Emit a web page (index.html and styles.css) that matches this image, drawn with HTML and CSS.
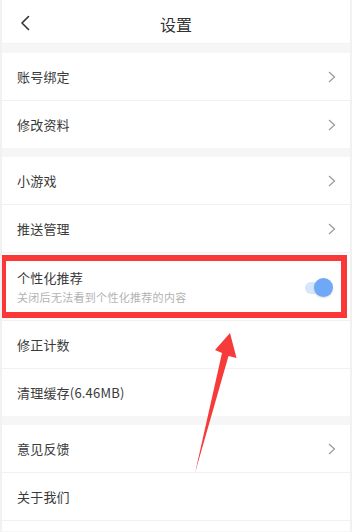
FILE: index.html
```html
<!DOCTYPE html>
<html lang="zh-CN">
<head>
<meta charset="utf-8">
<title>设置</title>
<link rel="stylesheet" href="styles.css">
</head>
<body>
<div class="page">
  <header class="topbar">
    <span class="back">
      <svg width="10" height="16" viewBox="0 0 10 16"><polyline points="8.5,1.5 2,8 8.5,14.5" fill="none" stroke="#333" stroke-width="1.6" stroke-linecap="round" stroke-linejoin="round"/></svg>
    </span>
    <h1 class="title">设置</h1>
    <span></span>
  </header>

  <section class="group">
    <div class="row"><span class="label">账号绑定</span><svg class="chev" width="8" height="12" viewBox="0 0 8 12"><polyline points="1,1 6.5,6 1,11" fill="none" stroke="#9a9a9a" stroke-width="1.2"/></svg></div>
    <div class="row last"><span class="label">修改资料</span><svg class="chev" width="8" height="12" viewBox="0 0 8 12"><polyline points="1,1 6.5,6 1,11" fill="none" stroke="#9a9a9a" stroke-width="1.2"/></svg></div>
  </section>

  <section class="group">
    <div class="row"><span class="label">小游戏</span><svg class="chev" width="8" height="12" viewBox="0 0 8 12"><polyline points="1,1 6.5,6 1,11" fill="none" stroke="#9a9a9a" stroke-width="1.2"/></svg></div>
    <div class="row"><span class="label">推送管理</span><svg class="chev" width="8" height="12" viewBox="0 0 8 12"><polyline points="1,1 6.5,6 1,11" fill="none" stroke="#9a9a9a" stroke-width="1.2"/></svg></div>
    <div class="row tall">
      <div class="stack">
        <span class="label">个性化推荐</span>
        <span class="sub">关闭后无法看到个性化推荐的内容</span>
      </div>
      <span class="toggle"><span class="knob"></span></span>
      <span class="highlight"></span>
    </div>
    <div class="row"><span class="label">修正计数</span></div>
    <div class="row last"><span class="label">清理缓存(6.46MB)</span></div>
  </section>

  <section class="group">
    <div class="row"><span class="label">意见反馈</span><svg class="chev" width="8" height="12" viewBox="0 0 8 12"><polyline points="1,1 6.5,6 1,11" fill="none" stroke="#9a9a9a" stroke-width="1.2"/></svg></div>
    <div class="row"><span class="label">关于我们</span></div>
    <div class="row stub"></div>
  </section>
</div>
<svg class="arrow" width="352" height="532" viewBox="0 0 352 532"><polygon points="230,333 236.5,358 228.5,356 195,473 222,353 215,350" fill="#f73a3a"/></svg>
</body>
</html>
```

FILE: styles.css
```css
html, body {
  margin: 0;
  padding: 0;
}
body {
  width: 352px;
  height: 532px;
  overflow: hidden;
  background: #f1f1f1;
  font-family: "Noto Sans CJK SC", "Noto Sans", sans-serif;
  color: #383838;
  position: relative;
}
.page {
  margin: 0 2px;
  background: #f6f6f6;
  height: 532px;
  overflow: hidden;
}
.topbar {
  height: 44px;
  background: #fff;
  display: grid;
  grid-template-columns: 48px 1fr 48px;
  align-items: center;
  border-bottom: 1px solid #f3f3f3;
  box-sizing: border-box;
}
.back {
  display: flex;
  padding-left: 18px;
  padding-top: 2px;
}
.title {
  margin: 0;
  text-align: center;
  font-size: 16px;
  font-weight: 400;
  color: #333;
  line-height: 20px;
  padding-top: 4px;
}
.group {
  margin-top: 9px;
  background: #fff;
}
.row {
  height: 48px;
  box-sizing: border-box;
  border-bottom: 1px solid #f1f1f1;
  display: flex;
  align-items: center;
  justify-content: space-between;
  padding: 0 14px 0 15px;
  position: relative;
}
.row.last {
  border-bottom: none;
  height: 47px;
}
.row.stub {
  border-bottom: none;
  height: 10px;
}
.label {
  font-size: 13px;
  line-height: 18px;
  color: #3a3a3a;
  letter-spacing: 0.2px;
}
.chev {
  display: block;
}
.row.tall {
  height: 68px;
  align-items: flex-start;
  padding-top: 16px;
}
.stack {
  display: flex;
  flex-direction: column;
  gap: 3px;
}
.sub {
  font-size: 11px;
  line-height: 15px;
  color: #b3b3b3;
  letter-spacing: 0.3px;
}
.toggle {
  position: relative;
  width: 28px;
  height: 20px;
  margin-top: 9px;
  margin-right: 3px;
}
.toggle::before {
  content: "";
  position: absolute;
  left: 0;
  top: 4px;
  width: 24px;
  height: 12px;
  border-radius: 6px;
  background: #d6e6fb;
}
.knob {
  position: absolute;
  right: 0;
  top: 0;
  width: 19px;
  height: 19px;
  border-radius: 50%;
  background: #6ea8f7;
  box-shadow: 0 1px 2px rgba(0,0,0,0.15);
}
.highlight {
  position: absolute;
  left: 0;
  top: 2px;
  right: 3px;
  height: 63px;
  box-sizing: border-box;
  border: 6px solid #fb3838;
  border-left-width: 4px;
  pointer-events: none;
}
.arrow {
  position: absolute;
  left: 0;
  top: 0;
  pointer-events: none;
}
```
